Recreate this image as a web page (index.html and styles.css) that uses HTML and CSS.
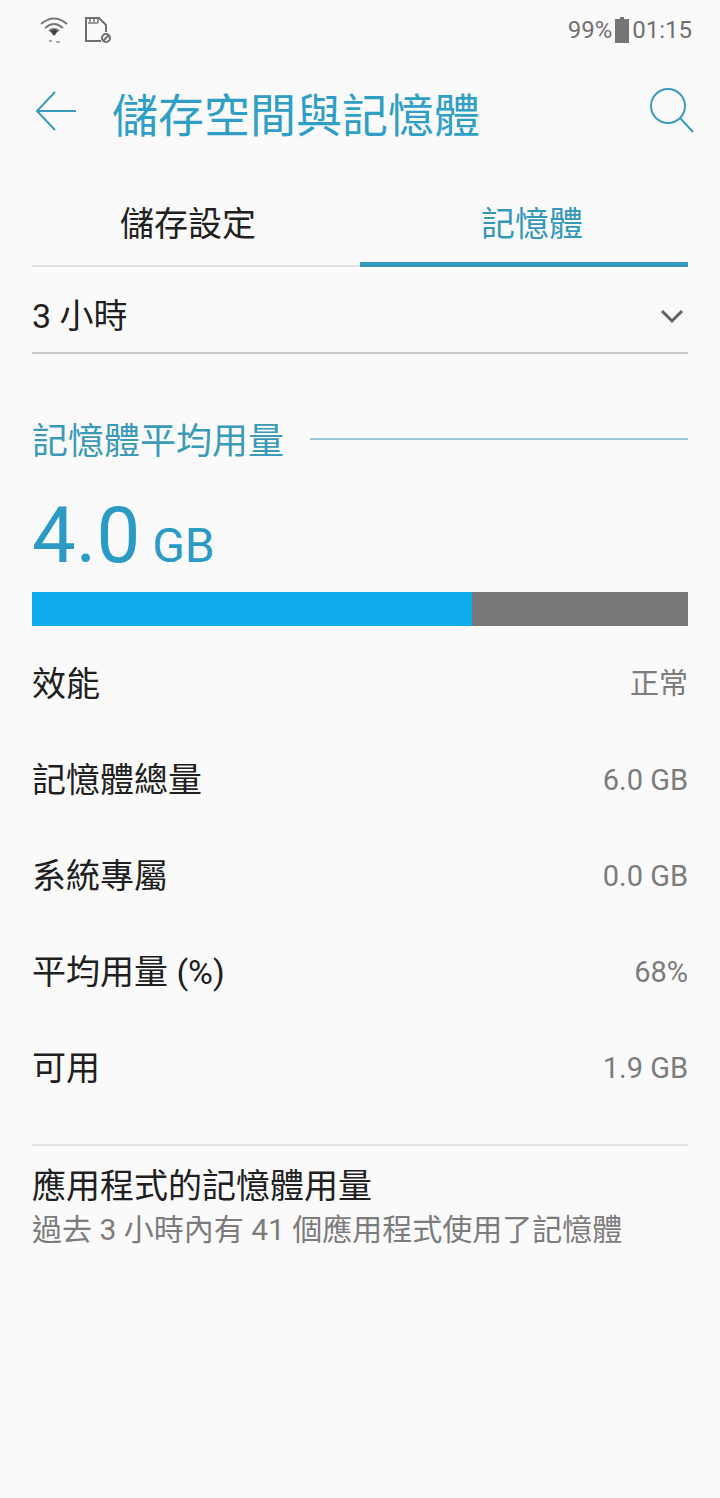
FILE: index.html
```html
<!DOCTYPE html>
<html lang="zh-Hant">
<head>
<meta charset="utf-8">
<meta name="viewport" content="width=device-width, initial-scale=1">
<title>儲存空間與記憶體</title>
<link rel="stylesheet" href="styles.css">
</head>
<body>
<div class="status">
  <div class="status-icons">
    <svg class="status-icon" viewBox="0 0 28 28" fill="none" stroke="#777" stroke-width="2" aria-hidden="true">
      <path d="M1 8Q14-3 27 8M5 12Q14 4 23 12M9 15Q14 11 19 15"/>
      <path d="M10 15Q14 12 18 15L14 20Z" fill="#444" stroke="none"/>
      <path d="M9 25h3M16 26h4" stroke="#aaa"/>
    </svg>
    <svg class="status-icon" viewBox="0 0 28 28" fill="none" stroke="#707070" stroke-width="2" aria-hidden="true">
      <path d="M17 25H2V2H15L22 9V16"/>
      <path d="M4 7H14M6 3v4M10 3v4M14 3v4" stroke="#999"/>
      <circle cx="22" cy="22" r="4"/>
      <path d="M19 25L25 19"/>
    </svg>
  </div>
  <div class="status-info">
    <span>99%</span>
    <svg class="battery" viewBox="0 0 14 26" aria-hidden="true"><path d="M5 0h4v2h5v24H0V2h5z" fill="#757575"/></svg>
    <span>01:15</span>
  </div>
</div>
<header class="header">
  <button class="icon-button" type="button" aria-label="返回">
    <svg class="back-icon" viewBox="0 0 42 42" fill="none" stroke="#3a9cbc" stroke-width="2" aria-hidden="true"><path d="M20 2L2 21L20 40M2 21H41"/></svg>
  </button>
  <h1 class="title">儲存空間與記憶體</h1>
  <button class="icon-button" type="button" aria-label="搜尋">
    <svg class="search-icon" viewBox="0 0 46 46" fill="none" stroke="#3a9cbc" stroke-width="2" aria-hidden="true"><circle cx="20" cy="18" r="17"/><path d="M32 30L45 44"/></svg>
  </button>
</header>
<main class="content">
  <nav class="tabs" role="tablist">
    <button class="tab" type="button" role="tab" aria-selected="false">儲存設定</button>
    <button class="tab tab-active" type="button" role="tab" aria-selected="true">記憶體</button>
  </nav>
  <div class="period">
    <select class="period-select" aria-label="時間範圍"><option>3 小時</option></select>
    <svg class="chevron" viewBox="0 0 24 16" fill="none" stroke="#606060" stroke-width="3" aria-hidden="true"><path d="M2 3L12 13L22 3"/></svg>
  </div>
  <h2 class="section-title">記憶體平均用量</h2>
  <p class="usage"><span class="usage-number">4.0</span> GB</p>
  <div class="bar" role="img" aria-label="68%"><div class="bar-fill" style="width: 67%"></div></div>
  <dl class="stats">
    <div class="stat"><dt>效能</dt><dd>正常</dd></div>
    <div class="stat"><dt>記憶體總量</dt><dd>6.0 GB</dd></div>
    <div class="stat"><dt>系統專屬</dt><dd>0.0 GB</dd></div>
    <div class="stat"><dt>平均用量 (%)</dt><dd>68%</dd></div>
    <div class="stat"><dt>可用</dt><dd>1.9 GB</dd></div>
  </dl>
  <a class="apps" href="#apps">
    <span class="apps-title">應用程式的記憶體用量</span>
    <span class="apps-summary">過去 3 小時內有 41 個應用程式使用了記憶體</span>
  </a>
</main>
</body>
</html>
```
FILE: styles.css
```css
* {
  box-sizing: border-box;
}

body {
  margin: 0;
  min-height: 100vh;
  background: #fafafa;
  color: #202020;
  font-family: Roboto, "Noto Sans CJK TC", sans-serif;
  font-size: 34px;
  line-height: 44px;
}

h1, h2, p, dl, dd {
  margin: 0;
  font-weight: 400;
}

button, select {
  margin: 0;
  padding: 0;
  border: 0;
  background: none;
  color: inherit;
  font: inherit;
}

svg {
  display: block;
}

.status {
  display: flex;
  justify-content: space-between;
  align-items: center;
  height: 60px;
  padding: 0 28px 0 40px;
  color: #707070;
  font-size: 24px;
}

.status-icons {
  display: flex;
  gap: 16px;
}

.status-icon {
  width: 28px;
  height: 28px;
}

.status-info {
  display: flex;
  align-items: center;
  gap: 3px;
}

.battery {
  width: 14px;
  height: 26px;
}

.header {
  display: flex;
  align-items: center;
  height: 112px;
  padding: 0 26px 0 35px;
}

.icon-button {
  padding-bottom: 10px;
}

.back-icon {
  width: 42px;
  height: 42px;
}

.search-icon {
  width: 46px;
  height: 46px;
}

.title {
  flex: 1;
  padding-left: 35px;
  color: #309fc5;
  font-size: 46px;
  line-height: 60px;
}

.content {
  padding: 0 32px;
}

.tabs {
  display: grid;
  grid-template-columns: 1fr 1fr;
  padding-top: 8px;
}

.tab {
  height: 87px;
  padding: 3px 16px 0 0;
  border-bottom: 2px solid #e2e2e2;
}

.tab-active {
  padding: 6px 0 0 16px;
  border-bottom: 5px solid #3598bb;
  color: #3598bb;
}

.period {
  display: grid;
  align-items: center;
  height: 87px;
  padding-top: 12px;
  border-bottom: 2px solid #c6c6c6;
}

.period-select,
.chevron {
  grid-area: 1 / 1;
}

.period-select {
  width: 100%;
  height: 100%;
  appearance: none;
}

.chevron {
  justify-self: end;
  width: 24px;
  height: 16px;
  margin-right: 4px;
  pointer-events: none;
}

.section-title {
  display: flex;
  align-items: center;
  gap: 26px;
  padding-top: 64px;
  color: #3c9ab9;
  font-size: 36px;
  line-height: 48px;
}

.section-title::after {
  content: "";
  flex: 1;
  height: 2px;
  margin-bottom: 6px;
  background: #9cc9d8;
}

.usage {
  padding-top: 24px;
  color: #2b9bc5;
  font-size: 48px;
  line-height: 92px;
}

.usage-number {
  font-size: 78px;
}

.bar {
  height: 34px;
  background: #787878;
}

.bar-fill {
  height: 100%;
  background: #0fadeb;
}

.stats {
  padding: 10px 0 28px;
}

.stat {
  display: flex;
  justify-content: space-between;
  align-items: center;
  height: 96px;
}

.stat dd {
  color: #7c7c7c;
  font-size: 29px;
}

.apps {
  display: flex;
  flex-direction: column;
  padding-top: 18px;
  border-top: 2px solid #e2e2e2;
  color: inherit;
  text-decoration: none;
}

.apps-summary {
  color: #7c7c7c;
  font-size: 30px;
}
```
